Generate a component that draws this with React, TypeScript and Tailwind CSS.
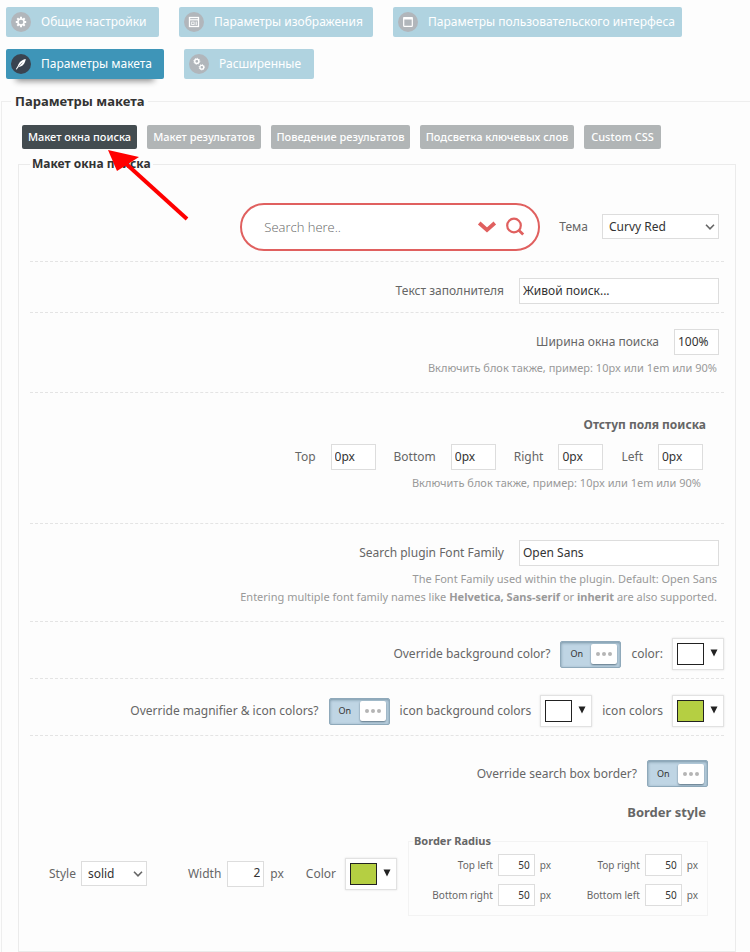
import { useState } from "react";
import type { ReactNode } from "react";

type TabItem = { label: string; width: string; icon: ReactNode };

const GearIcon = () => (
  <svg viewBox="0 0 20 20" className="h-5 w-5">
    <g stroke="white" strokeWidth="2">
      <path d="M10 4.8v10.4M4.8 10h10.4M6.3 6.3l7.4 7.4M13.7 6.3l-7.4 7.4" />
    </g>
    <circle cx="10" cy="10" r="3.8" fill="white" />
    <circle cx="10" cy="10" r="2.3" className="fill-[#b1b6bb]" />
  </svg>
);

const ImageIcon = () => (
  <svg viewBox="0 0 20 20" className="h-5 w-5" fill="none" stroke="white">
    <rect x="5.5" y="5.5" width="9" height="9" strokeWidth="1.3" />
    <path d="M6 7.8h8" strokeWidth="1.2" />
    <rect x="7.7" y="10" width="2.4" height="2.6" strokeWidth="0.8" />
    <path d="M12.2 9.5v3.6" strokeWidth="1" />
  </svg>
);

const WindowIcon = () => (
  <svg viewBox="0 0 20 20" className="h-5 w-5" fill="none" stroke="white">
    <rect x="5.7" y="5.7" width="8.6" height="8.6" rx="0.6" strokeWidth="1.2" />
    <path d="M5.4 6.4h9.2" strokeWidth="2.2" />
  </svg>
);

const FeatherIcon = () => (
  <svg viewBox="0 0 20 20" className="h-5 w-5">
    <path
      d="M14.8 5c-3.6.6-6.8 3-7.8 6.6l-2.2 3.6.8.4 2-2.6c3.600-.2 6.400-3 7.200-8z"
      fill="white"
    />
    <path d="M7.600 12.600l3.800-4" className="stroke-[#3a4450]" strokeWidth="0.5" />
  </svg>
);

const GearsIcon = () => (
  <svg viewBox="0 0 20 20" className="h-5 w-5" fill="none" stroke="white">
    <circle cx="7.8" cy="7.3" r="2.1" strokeWidth="1.4" />
    <circle cx="7.8" cy="7.3" r="3" strokeWidth="0.9" strokeDasharray="1.2 1.1" />
    <circle cx="12.8" cy="13.2" r="1.9" strokeWidth="1.3" />
    <circle cx="12.8" cy="13.2" r="2.7" strokeWidth="0.8" strokeDasharray="1.1 1" />
  </svg>
);

const mainTabs: TabItem[] = [
  { label: "Общие настройки", width: "w-[153px]", icon: <GearIcon /> },
  { label: "Параметры изображения", width: "w-[194px]", icon: <ImageIcon /> },
  {
    label: "Параметры пользовательского интерфеса",
    width: "w-[289px]",
    icon: <WindowIcon />,
  },
  { label: "Параметры макета", width: "w-[158px]", icon: <FeatherIcon /> },
  { label: "Расширенные", width: "w-[130px]", icon: <GearsIcon /> },
];

const subTabs = [
  { label: "Макет окна поиска", width: "w-[115px]" },
  { label: "Макет результатов", width: "w-[114px]" },
  { label: "Поведение результатов", width: "w-[139px]" },
  { label: "Подсветка ключевых слов", width: "w-[154px]" },
  { label: "Custom CSS", width: "w-[77px]" },
];

const Row = ({ className, children }: { className: string; children: ReactNode }) => (
  <div className={`border-b border-dashed border-[#e4e4e4] ${className}`}>{children}</div>
);

type FieldProps = {
  id: string;
  label: string;
  value: string;
  width: string;
};

const Field = ({ id, label, value, width }: FieldProps) => (
  <div className="flex items-center gap-[15px]">
    <label htmlFor={id}>{label}</label>
    <input
      id={id}
      type="text"
      defaultValue={value}
      className={`h-[26px] border border-[#dddddd] bg-white px-[3px] pb-[2px] text-[#333333] ${width}`}
    />
  </div>
);

const Hint = ({ children }: { children: ReactNode }) => (
  <p className="pr-[2px] text-right text-[11px] leading-[18px] text-[#999999]">
    {children}
  </p>
);

const Dropdown = ({
  id,
  width,
  options,
}: {
  id: string;
  width: string;
  options: string[];
}) => (
  <div className={`relative ${width}`}>
    <select
      id={id}
      className="h-[25px] w-full appearance-none border border-[#dddddd] bg-white pl-[6px] text-[#333333]"
    >
      {options.map((option) => (
        <option key={option}>{option}</option>
      ))}
    </select>
    <svg
      viewBox="0 0 10 6"
      className="pointer-events-none absolute top-[10px] right-[4px] h-[6px] w-[10px]"
      fill="none"
      stroke="#666666"
      strokeWidth="1.6"
    >
      <path d="M1 0.8l4 4 4-4" />
    </svg>
  </div>
);

const Toggle = ({ id, label }: { id: string; label: string }) => {
  const [on, setOn] = useState(true);
  return (
    <label htmlFor={id} className="flex items-center gap-[10px]">
      {label}
      <input
        id={id}
        type="checkbox"
        className="sr-only"
        checked={on}
        onChange={() => setOn((prev) => !prev)}
      />
      <span
        className={`flex h-[27px] w-[61px] items-center justify-between rounded-[2px] border border-[#8fa9ba] bg-[#bfd5e4] pr-[3px] pl-[9px] shadow-[inset_0_1px_3px_#7893a5] ${
          on ? "" : "flex-row-reverse"
        }`}
      >
        <span className="text-[9px] text-[#333333]">{on ? "On" : "Off"}</span>
        <span className="flex h-5 w-[26px] items-center justify-center gap-[2px] rounded-[2px] bg-white shadow-[0_1px_2px_#5d7484]">
          <span className="h-1 w-1 rounded-full bg-[#b5b5b5]" />
          <span className="h-1 w-1 rounded-full bg-[#b5b5b5]" />
          <span className="h-1 w-1 rounded-full bg-[#b5b5b5]" />
        </span>
      </span>
    </label>
  );
};

const ColorPicker = ({
  id,
  label,
  swatch,
}: {
  id: string;
  label: string;
  swatch: string;
}) => (
  <div className="flex items-center gap-[9px]">
    <label htmlFor={id}>{label}</label>
    <button
      id={id}
      type="button"
      className="flex h-8 w-[52px] items-center gap-[6px] border border-[#e2e2e2] bg-white pl-1 shadow-[0_0_2px_#e2e2e2]"
    >
      <span className={`h-[22px] w-[27px] border border-[#222222] ${swatch}`} />
      <svg viewBox="0 0 8 8" className="mb-[2px] h-2 w-2" fill="#222222">
        <path d="M0.5 0.5h7l-3.5 7z" />
      </svg>
    </button>
  </div>
);

const RadiusField = ({ id, label }: { id: string; label: string }) => (
  <div className="flex items-center justify-end gap-[5px]">
    <label htmlFor={id}>{label}</label>
    <input
      id={id}
      type="text"
      defaultValue="50"
      className="h-[22px] w-[37px] border border-[#dddddd] bg-white px-1 text-right text-[#333333]"
    />
    <span>px</span>
  </div>
);

const App = () => {
  const [mainTab, setMainTab] = useState(3);
  const [subTab, setSubTab] = useState(0);

  return (
    <div className="relative min-h-screen overflow-x-hidden bg-[#fdfdfd] pt-[7px] font-['Noto_Sans','Open_Sans',sans-serif] text-[12px] leading-[18px] text-[#666666]">
      <nav className="flex flex-wrap gap-x-5 gap-y-3 px-[6px]">
        {mainTabs.map((tab, i) => (
          <button
            key={tab.label}
            type="button"
            onClick={() => setMainTab(i)}
            className={`flex h-[30px] items-center gap-[10px] rounded-[2px] pl-[5px] whitespace-nowrap text-white ${tab.width} ${
              mainTab === i
                ? "bg-[#3e95b8] shadow-[0_12px_6px_-10px_#888888]"
                : "bg-[#b0d3e0]"
            }`}
          >
            <span
              className={`rounded-full ${mainTab === i ? "bg-[#3a4450]" : "bg-[#b1b6bb]"}`}
            >
              {tab.icon}
            </span>
            {tab.label}
          </button>
        ))}
      </nav>

      <fieldset className="mt-3 ml-px border border-r-0 border-b-0 border-[#eeeeee] pr-[14px] pl-4">
        <legend className="-ml-[7px] px-1 text-[13px] leading-5 font-bold text-[#333333]">
          Параметры макета
        </legend>
        <div className="flex flex-wrap gap-[10px] pt-[14px] pl-1">
          {subTabs.map((tab, i) => (
            <button
              key={tab.label}
              type="button"
              onClick={() => setSubTab(i)}
              className={`h-6 rounded-[2px] text-[11px] font-medium whitespace-nowrap text-white ${tab.width} ${
                subTab === i ? "bg-[#434c50]" : "bg-[#b1b5b6]"
              }`}
            >
              {tab.label}
            </button>
          ))}
        </div>

        <fieldset className="mt-[5px] border border-[#ebebeb] pr-[11px] pb-[35px] pl-[11px]">
          <legend className="px-[2px] text-[12px] leading-5 font-bold text-[#333333]">
            Макет окна поиска
          </legend>

          <Row className="flex items-start justify-end pt-[29px] pr-[5px] pb-[10px]">
            <div className="flex h-12 w-[300px] items-center gap-2 rounded-full border-2 border-[#e0605f] bg-white pr-[13px] pl-[22px]">
              <input
                type="text"
                aria-label="Search here.."
                placeholder="Search here.."
                className="min-w-0 flex-1 font-['Open_Sans',sans-serif] text-[13px] font-light text-[#666666] outline-none placeholder:text-[#666666]"
              />
              <svg
                viewBox="0 0 20 12"
                className="h-[12px] w-[20px]"
                fill="none"
                stroke="#e0605f"
                strokeWidth="3.8"
              >
                <path d="M2.2 2l7.8 7 7.8-7" />
              </svg>
              <svg
                viewBox="0 0 20 20"
                className="h-5 w-5"
                fill="none"
                stroke="#e0605f"
              >
                <circle cx="9" cy="8.5" r="6.8" strokeWidth="2.2" />
                <path d="M13.5 13l4.7 4.6" strokeWidth="2.8" />
              </svg>
            </div>
            <div className="ml-[19px] flex items-center gap-[14px] pt-[11px]">
              <label htmlFor="theme">Тема</label>
              <Dropdown id="theme" width="w-[117px]" options={["Curvy Red"]} />
            </div>
          </Row>

          <Row className="flex justify-end pt-4 pr-[5px] pb-2">
            <Field
              id="placeholder"
              label="Текст заполнителя"
              value="Живой поиск..."
              width="w-[200px]"
            />
          </Row>

          <Row className="flex flex-col items-end gap-1 pt-4 pr-[5px] pb-[15px]">
            <Field id="width" label="Ширина окна поиска" value="100%" width="w-[45px]" />
            <Hint>Включить блок также, пример: 10px или 1em или 90%</Hint>
          </Row>

          <Row className="flex flex-col items-end gap-1 pt-[22px] pr-[21px] pb-[31px]">
            <h3 className="-mr-[3px] pb-[6px] text-[12px] leading-[19px] font-bold">
              Отступ поля поиска
            </h3>
            <div className="flex gap-[18px]">
              <Field id="top" label="Top" value="0px" width="w-[45px]" />
              <Field id="bottom" label="Bottom" value="0px" width="w-[45px]" />
              <Field id="right" label="Right" value="0px" width="w-[45px]" />
              <Field id="left" label="Left" value="0px" width="w-[45px]" />
            </div>
            <Hint>Включить блок также, пример: 10px или 1em или 90%</Hint>
          </Row>

          <Row className="flex flex-col items-end gap-1 pt-4 pr-[5px] pb-[15px]">
            <Field
              id="font"
              label="Search plugin Font Family"
              value="Open Sans"
              width="w-[200px]"
            />
            <Hint>
              The Font Family used within the plugin. Default: Open Sans
              <br />
              Entering multiple font family names like <b>Helvetica, Sans-serif</b> or{" "}
              <b>inherit</b> are also supported.
            </Hint>
          </Row>

          <Row className="flex items-center justify-end gap-[10px] pt-4 pb-2">
            <Toggle id="override-bg" label="Override background color?" />
            <ColorPicker id="bg-color" label="color:" swatch="bg-white" />
          </Row>

          <Row className="flex items-center justify-end gap-[10px] pt-4 pb-2">
            <Toggle id="override-icons" label="Override magnifier & icon colors?" />
            <ColorPicker
              id="icon-bg"
              label="icon background colors"
              swatch="bg-white"
            />
            <ColorPicker id="icon-color" label="icon colors" swatch="bg-[#b5cf42]" />
          </Row>

          <div className="flex flex-col items-end pt-6 pr-4">
            <Toggle id="override-border" label="Override search box border?" />
            <h3 className="mt-4 pr-[2px] text-[13px] leading-[19px] font-bold">
              Border style
            </h3>
            <div className="mt-[9px] flex w-full items-center justify-end pl-[19px]">
              <div className="mr-auto flex items-center gap-[5px]">
                <label htmlFor="border-style">Style</label>
                <Dropdown
                  id="border-style"
                  width="w-[66px]"
                  options={["solid", "dashed", "dotted", "none"]}
                />
              </div>
              <div className="mr-[22px] flex items-center gap-[6px]">
                <label htmlFor="border-width">Width</label>
                <input
                  id="border-width"
                  type="text"
                  defaultValue="2"
                  className="h-[26px] w-[37px] border border-[#dddddd] bg-white px-[3px] pb-[2px] text-right text-[#333333]"
                />
                <span>px</span>
              </div>
              <ColorPicker id="border-color" label="Color" swatch="bg-[#b5cf42]" />
              <fieldset className="ml-[11px] w-[300px] border border-[#f3f3f3] pr-[9px] pb-[9px]">
                <legend className="ml-1 px-px text-[11px] leading-5 font-bold">
                  Border Radius
                </legend>
                <div className="grid grid-cols-[142px_1fr] gap-y-2 pt-[3px] text-[10px]">
                  <RadiusField id="top-left" label="Top left" />
                  <RadiusField id="top-right" label="Top right" />
                  <RadiusField id="bottom-right" label="Bottom right" />
                  <RadiusField id="bottom-left" label="Bottom left" />
                </div>
              </fieldset>
            </div>
          </div>
        </fieldset>
      </fieldset>

      {/* pointer to the active tab */}
      <svg
        viewBox="0 0 82 72"
        className="pointer-events-none absolute top-[149px] left-[107px] h-[72px] w-[82px]"
      >
        <path d="M16 12l64 58" stroke="#ff0000" strokeWidth="4" />
        <path d="M1 1l31 7-22 14z" fill="#ff0000" />
      </svg>
    </div>
  );
};

export default App;
